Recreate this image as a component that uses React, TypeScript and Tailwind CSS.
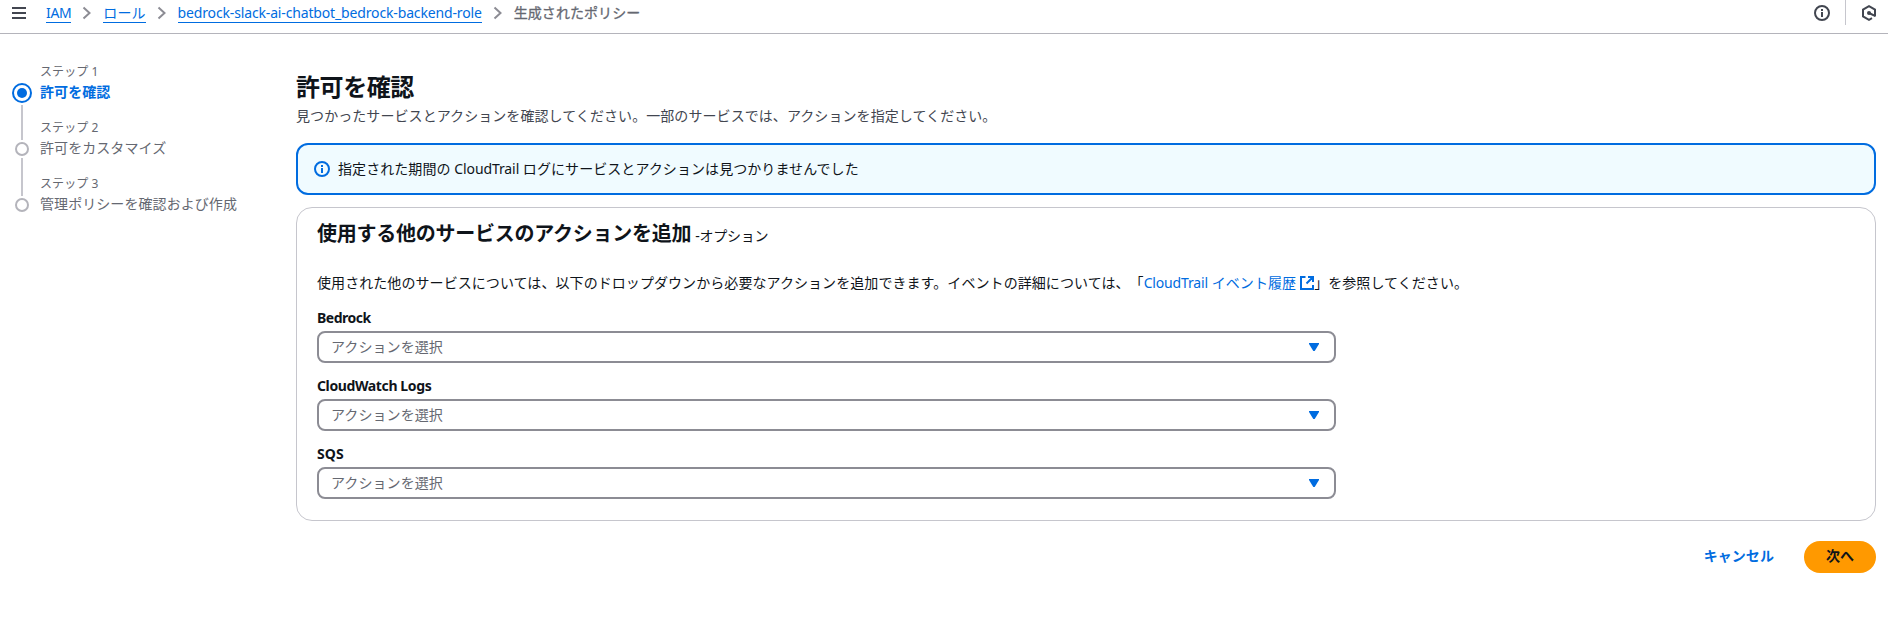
import React from "react";

const jp = "font-['Noto_Sans','Noto_Sans_CJK_JP',sans-serif]";

function Info({ className }: { className: string }) {
  return (
    <svg viewBox="0 0 16 16" className={className} fill="none" stroke="currentColor" strokeWidth="2">
      <circle cx="8" cy="8" r="7" />
      <path d="M8 12V7M8 6V4" />
    </svg>
  );
}

function Chevron() {
  return (
    <svg viewBox="0 0 16 16" className="h-4 w-4 shrink-0 text-[#8c8c94]" fill="none" stroke="currentColor" strokeWidth="2">
      <path d="M4.5 2.5 10.5 8l-6 5.5" />
    </svg>
  );
}

function Crumb({ children }: { children: React.ReactNode }) {
  return (
    <a className="h-[20px] whitespace-nowrap border-b border-[#006ce0] leading-5 text-[#006ce0]">{children}</a>
  );
}

function Step({ n, title, active, last }: { n: number; title: string; active?: boolean; last?: boolean }) {
  return (
    <li className="flex h-14">
      <div className="flex w-5 flex-col items-center">
        {active ? (
          <>
            <div className="mt-[21px] flex h-5 w-5 shrink-0 items-center justify-center rounded-full border-2 border-[#006ce0]">
              <div className="h-[10px] w-[10px] rounded-full bg-[#006ce0]" />
            </div>
            <div className="mt-0.5 w-0.5 flex-1 bg-[#c6c6cd]" />
          </>
        ) : (
          <>
            <div className="h-[22px] w-0.5 shrink-0 bg-[#c6c6cd]" />
            <div className="mt-0.5 h-[14px] w-[14px] shrink-0 rounded-full border-2 border-[#b4b4bb]" />
            {!last && <div className="mt-0.5 w-0.5 flex-1 bg-[#c6c6cd]" />}
          </>
        )}
      </div>
      <div className="ml-2 whitespace-nowrap">
        <div className="h-5 text-xs leading-5 text-[#656871]">ステップ {n}</div>
        <div className={active ? "text-sm font-bold leading-5 text-[#006ce0]" : "text-sm leading-5 text-[#656871]"}>{title}</div>
      </div>
    </li>
  );
}

function Field({ label, className }: { label: string; className: string }) {
  return (
    <div className="h-[68px]">
      <div className="flex h-[25px] items-center text-sm font-bold">
        <span className={className}>{label}</span>
      </div>
      <div className="mt-px flex h-8 w-[1019px] items-center justify-between rounded-lg border-2 border-[#8c8c94] pl-3 pr-[15px] text-sm text-[#656871]">
        <span>アクションを選択</span>
        <svg viewBox="0 0 10 8" className="h-2 w-[10px]" fill="#006ce0">
          <path d="M0 0h10v1L5.7 8H4.3L0 1z" />
        </svg>
      </div>
    </div>
  );
}

export default function App() {
  return (
    <div className={`${jp} h-[618px] w-full overflow-hidden bg-white text-sm tracking-[0.07px] text-[#0f141a] [text-spacing-trim:space-all]`}>
      <header className="flex h-[34px] items-start justify-between border-b border-[#b4b4bb] pl-3 pr-3">
        <div className="flex h-[26px] items-center">
          <svg viewBox="0 0 14 12" className="h-3 w-[14px] text-[#424650]" stroke="currentColor" strokeWidth="2">
            <path d="M0 1h14M0 6h14M0 11h14" />
          </svg>
          <nav className="ml-5 flex items-center gap-2">
            <Crumb><span className="tracking-[-0.35px]">IAM</span></Crumb>
            <Chevron />
            <Crumb>ロール</Crumb>
            <Chevron />
            <Crumb><span className="tracking-[-0.15px]">bedrock-slack-ai-chatbot_bedrock-backend-role</span></Crumb>
            <Chevron />
            <span className="text-[#656871] [-webkit-text-stroke:0.3px_#656871]">生成されたポリシー</span>
          </nav>
        </div>
        <div className="flex h-[26px] items-center text-[#424650]">
          <Info className="h-4 w-4" />
          <div className="ml-[15px] h-[25px] w-px self-start bg-[#c6c6cd]" />
          <svg viewBox="0 0 14 16" className="ml-4 h-4 w-[14px]" fill="none" stroke="currentColor" strokeWidth="2">
            <path d="M10 13.2 7 14.8 1 11.5v-7L7 1.2l6 3.3v6.7" />
            <path d="M7 8l6.5 3.2" />
            <circle cx="7" cy="8" r="2" fill="currentColor" stroke="none" />
          </svg>
        </div>
      </header>
      <main className="flex pr-3">
        <ol className="w-[284px] shrink-0 pl-3 pt-7">
          <Step n={1} title="許可を確認" active />
          <Step n={2} title="許可をカスタマイズ" />
          <Step n={3} title="管理ポリシーを確認および作成" last />
        </ol>
        <div className="ml-3 flex min-w-0 flex-1 flex-col">
          <h1 className="mt-[38px] h-[30px] text-2xl font-bold leading-[30px] tracking-[-0.43px]">許可を確認</h1>
          <p className="mt-1 h-5 leading-5 text-[#424650]">見つかったサービスとアクションを確認してください。一部のサービスでは、アクションを指定してください。</p>
          <div className="mt-[17px] flex h-[52px] items-center gap-2 rounded-xl border-2 border-[#006ce0] bg-[#f0fbff] pl-4">
            <Info className="h-4 w-4 text-[#006ce0]" />
            <p>指定された期間の <span className="tracking-[-0.1px]">CloudTrail</span> ログにサービスとアクションは見つかりませんでした</p>
          </div>
          <section className="mt-3 h-[314px] rounded-2xl border border-[#c6c6cd] px-5">
            <h2 className="mt-[14px] h-6 text-xl font-bold leading-6 tracking-[-0.25px]">
              使用する他のサービスのアクションを追加 <span className="-ml-px text-sm font-normal">-オプション</span>
            </h2>
            <p className="mb-3 mt-[27px] flex h-5 items-center whitespace-nowrap leading-5">
              使用された他のサービスについては、以下のドロップダウンから必要なアクションを追加できます。イベントの詳細については、「
              <a className="flex items-center text-[#006ce0]">
                <span className="whitespace-pre"><span className="tracking-[-0.15px]">CloudTrail</span> イベント履歴</span>
                <svg viewBox="0 0 14 14" className="ml-1 h-[14px] w-[14px]" fill="none" stroke="currentColor" strokeWidth="2">
                  <path d="M5.5 1H1v12h12V9M8 1h5v5M13 1 6.5 7.5" />
                </svg>
              </a>
              」を参照してください。
            </p>
            <Field label="Bedrock" className="tracking-[-0.5px]" />
            <Field label="CloudWatch Logs" className="tracking-[-0.38px]" />
            <Field label="SQS" className="" />
          </section>
          <div className="mt-5 flex h-8 justify-end font-bold">
            <button className="mr-[30px] pb-0.5 text-[#006ce0]">キャンセル</button>
            <button className="w-[72px] rounded-full bg-[#ff9900] pb-0.5">次へ</button>
          </div>
        </div>
      </main>
    </div>
  );
}
